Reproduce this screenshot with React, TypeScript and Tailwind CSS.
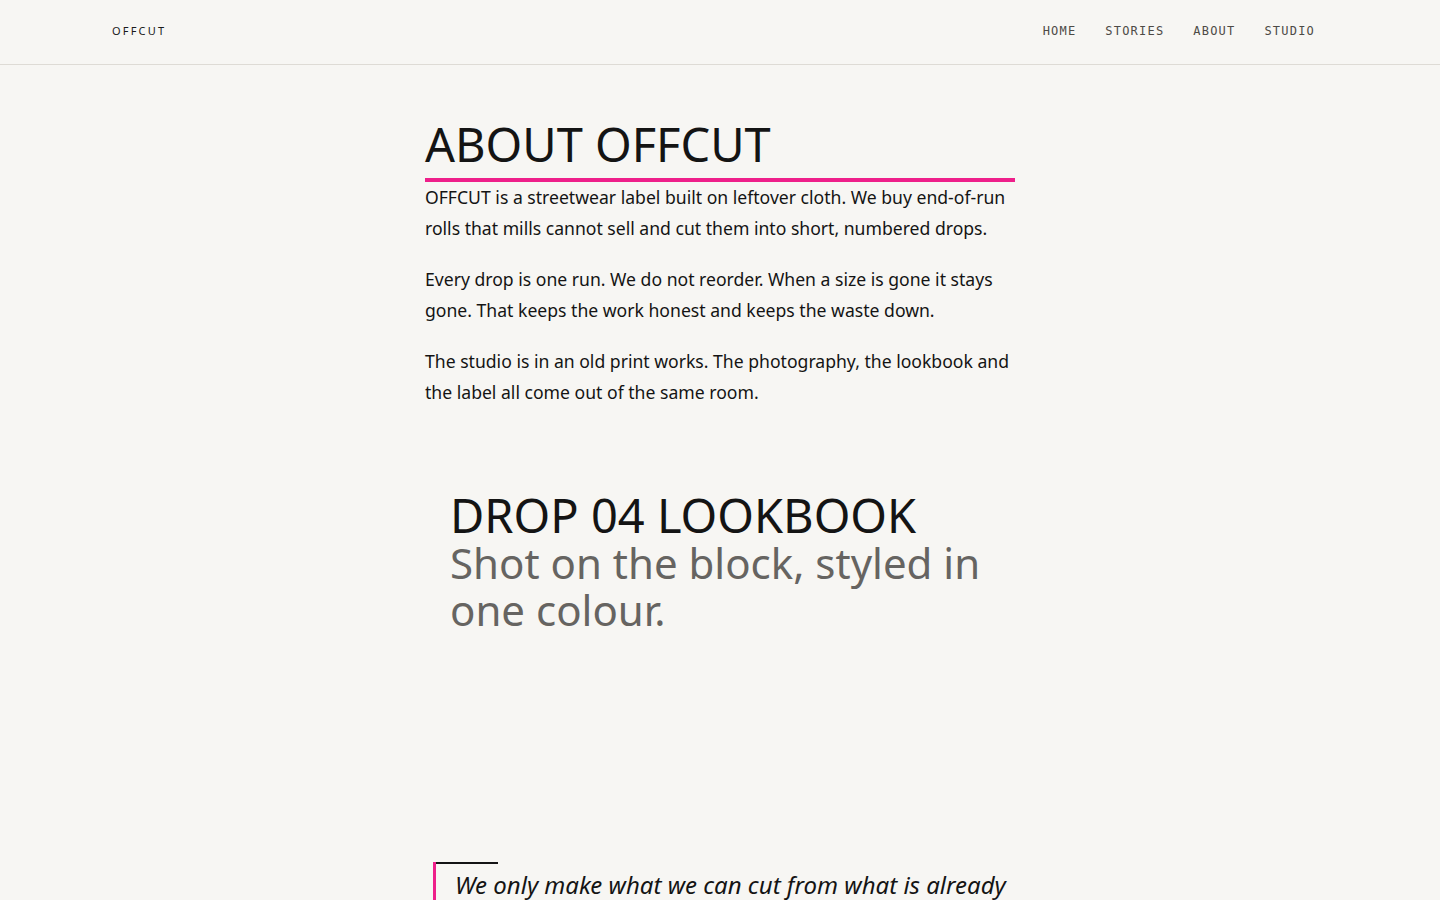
import React from "react";

const nav = ["HOME", "STORIES", "ABOUT", "STUDIO"];

const paragraphs = [
  "OFFCUT is a streetwear label built on leftover cloth. We buy end-of-run rolls that mills cannot sell and cut them into short, numbered drops.",
  "Every drop is one run. We do not reorder. When a size is gone it stays gone. That keeps the work honest and keeps the waste down.",
  "The studio is in an old print works. The photography, the lookbook and the label all come out of the same room.",
];

function Header() {
  return (
    <header className="h-[65px] border-b border-[#dedbd5] flex items-center justify-between pl-[112px] pr-[125px]">
      <a className="text-[11px] tracking-[0.2em] text-[#1a1a1a] pb-[2px]" href="#">
        OFFCUT
      </a>
      <nav className="flex items-center gap-[29px] pb-[2px] font-['DejaVu_Sans_Mono',monospace] text-[12px] tracking-[0.1em] text-[#4d4a46]">
        {nav.map((n) => (
          <a key={n} href="#">
            {n}
          </a>
        ))}
      </nav>
    </header>
  );
}

export default function App() {
  return (
    <div className="min-h-[900px] bg-[#f7f6f3] text-[#141414] font-['Noto_Sans',sans-serif]">
      <Header />
      <main className="w-[590px] mx-auto pt-[53px]">
        <h1 className="text-[47px] leading-[53px] pb-[7px] border-b-4 border-[#ee1f8a]">ABOUT OFFCUT</h1>
        {paragraphs.map((p, i) => (
          <p key={i} className="text-[17.6px] leading-[31px] mb-[20px]">
            {p}
          </p>
        ))}

        {/* lookbook intro */}
        <section className="px-[25px] mt-[84px]">
          <h2 className="text-[47px] leading-[47px]">DROP 04 LOOKBOOK</h2>
          <p className="text-[42px] leading-[47px] text-[#666461]">Shot on the block, styled in one colour.</p>
        </section>

        <blockquote className="relative mt-[229px] ml-[8px] border-l-[3px] border-[#ee1f8a] pl-[19px] pt-[5px]">
          <span className="absolute left-0 top-0 w-[62px] h-[2px] bg-[#141414]" />
          <p className="italic text-[24px] leading-[36px]">
            We only make what we can cut from what is already made. Nothing new is woven for us.
          </p>
        </blockquote>
        <div className="h-[80px]" />
      </main>
    </div>
  );
}
